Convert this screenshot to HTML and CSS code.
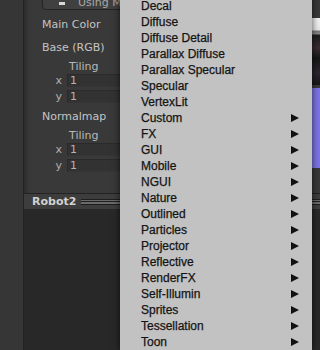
FILE: index.html
```html
<!DOCTYPE html>
<html lang="en">
<head>
  <meta charset="UTF-8" />
  <title>Shader Menu</title>
  <link rel="stylesheet" href="styles.css">
</head>
<body>
  <div class="editor">
    <!-- left tool strip -->
    <div class="strip"></div>

    <!-- inspector -->
    <div class="inspector">
      <div class="material">
        <div class="fields">
          <div class="shader-btn"><span class="btn-icon"></span>Using Mo</div>
          <div class="prop">Main Color</div>
          <div class="prop">Base (RGB)</div>
          <div class="tiling">Tiling</div>
          <div class="vec"><span class="axis">x</span><span class="field">1</span></div>
          <div class="vec"><span class="axis">y</span><span class="field">1</span></div>
          <div class="prop normal">Normalmap</div>
          <div class="tiling">Tiling</div>
          <div class="vec"><span class="axis">x</span><span class="field">1</span></div>
          <div class="vec"><span class="axis">y</span><span class="field">1</span></div>
        </div>
        <div class="thumbs">
          <div class="thumb base"></div>
          <div class="thumb bump"></div>
        </div>
      </div>

      <div class="header">
        <span class="title">Robot2</span>
        <span class="grip"></span>
      </div>
      <div class="empty"></div>
    </div>
  </div>

  <!-- shader dropdown -->
  <div class="menu">
    <div class="item">Decal</div>
    <div class="item">Diffuse</div>
    <div class="item">Diffuse Detail</div>
    <div class="item">Parallax Diffuse</div>
    <div class="item">Parallax Specular</div>
    <div class="item">Specular</div>
    <div class="item">VertexLit</div>
    <div class="item sub">Custom</div>
    <div class="item sub">FX</div>
    <div class="item sub">GUI</div>
    <div class="item sub">Mobile</div>
    <div class="item sub">NGUI</div>
    <div class="item sub">Nature</div>
    <div class="item sub">Outlined</div>
    <div class="item sub">Particles</div>
    <div class="item sub">Projector</div>
    <div class="item sub">Reflective</div>
    <div class="item sub">RenderFX</div>
    <div class="item sub">Self-Illumin</div>
    <div class="item sub">Sprites</div>
    <div class="item sub">Tessellation</div>
    <div class="item sub">Toon</div>
  </div>
</body>
</html>
```

FILE: styles.css
```css
html, body {
  margin: 0;
  height: 100%;
  overflow: hidden;
}

body {
  font-family: "DejaVu Sans", sans-serif;
  font-size: 11px;
  background-color: #262626;
  color: #c4c4c4;
  position: relative;
}

.editor {
  display: flex;
  height: 350px;
}

.strip {
  width: 23px;
  background-color: #363636;
  border-right: 1px solid #232323;
}

.inspector {
  flex: 1;
  display: flex;
  flex-direction: column;
  background-color: #393939;
  box-shadow: inset 6px 0 4px -4px #2a2a2a;
}

.material {
  height: 193px;
  display: flex;
  justify-content: space-between;
}

.fields {
  padding-left: 18px;
  width: 200px;
}

.shader-btn {
  margin-top: -7px;
  height: 17px;
  width: 200px;
  box-sizing: border-box;
  border: 1px solid #242424;
  border-radius: 0 0 0 4px;
  background-color: #404040;
  display: flex;
  align-items: flex-end;
  padding-left: 35px;
  line-height: 13px;
  color: #a8a8a8;
  position: relative;
}

.btn-icon {
  position: absolute;
  left: 16px;
  bottom: 4px;
  width: 6px;
  height: 3px;
  background-color: #d8d8d8;
}

.prop {
  height: 16px;
  line-height: 16px;
  margin-top: 7px;
  margin-bottom: 2px;
}

.prop:first-of-type {
  margin-top: 6px;
}

.prop.normal {
  margin-top: 6px;
}

.tiling {
  height: 14px;
  line-height: 14px;
  margin-top: 4px;
  padding-left: 27px;
  color: #b8b8b8;
}

.tiling + .vec {
  margin-top: 0;
}

.vec {
  display: flex;
  align-items: center;
  height: 13px;
  margin-top: 3px;
}

.axis {
  width: 20px;
  text-align: right;
  padding-right: 5px;
  color: #b0b0b0;
}

.field {
  flex: 1;
  height: 13px;
  box-sizing: border-box;
  border: 1px solid #2a2a2a;
  border-bottom-color: #353535;
  background-color: #323232;
  line-height: 11px;
  padding-left: 2px;
  color: #b4b4b4;
}

.thumbs {
  display: flex;
  flex-direction: column;
  gap: 3px;
  padding-top: 18px;
  width: 8px;
}

.thumb.base {
  height: 67px;
  background: linear-gradient(#f2f2f2 0, #e8e8e8 12px, #777 13px, #888 16px, #1c1c1c 17px, #3a2b2e 30px, #161616 40px, #2b2530 55px, #171717 67px);
}

.thumb.bump {
  height: 80px;
  background-color: #7b74e4;
}

.header {
  height: 16px;
  box-sizing: border-box;
  border-top: 1px solid #232323;
  background-color: #3d3d3d;
  display: flex;
  align-items: center;
  padding-left: 8px;
  gap: 5px;
}

.title {
  font-weight: bold;
  color: #d2d2d2;
  line-height: 14px;
}

.grip {
  flex: 1;
  height: 4px;
  border-top: 1px solid #1e1e1e;
  border-bottom: 1px solid #1e1e1e;
  background: linear-gradient(#6a6a6a 0, #6a6a6a 1px, #1e1e1e 1px, #1e1e1e 2px, #6a6a6a 2px);
  margin-top: 1px;
}

.empty {
  flex: 1;
  background-color: #282828;
}

.menu {
  position: absolute;
  left: 120px;
  top: -2px;
  width: 192px;
  background-color: #c2c2c2;
  box-shadow: 0 0 6px 1px rgba(0, 0, 0, 0.55);
  font-family: "Liberation Sans", Arial, sans-serif;
  font-size: 12px;
  color: #141414;
  -webkit-text-stroke: 0.25px #141414;
}

.item {
  height: 16px;
  line-height: 16px;
  padding-left: 21px;
  padding-right: 13px;
  display: flex;
  justify-content: space-between;
  align-items: center;
}

.item.sub::after {
  content: "";
  width: 0;
  height: 0;
  border-left: 8px solid #111;
  border-top: 4.5px solid transparent;
  border-bottom: 4.5px solid transparent;
}
```
